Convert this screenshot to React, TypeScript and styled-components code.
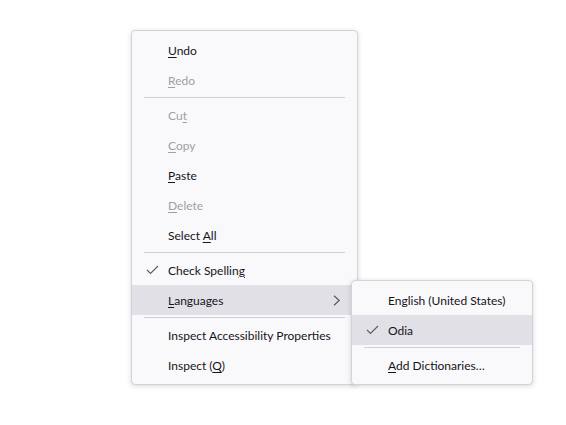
import React from "react";
import styled, { createGlobalStyle } from "styled-components";

const Global = createGlobalStyle`
  html, body { margin: 0; padding: 0; background: #ffffff; }
  body { font-family: "Lato", "Segoe UI", sans-serif; }
`;

const Page = styled.div`
  width: 566px;
  height: 425px;
  padding: 30px 0 0 131px;
  box-sizing: border-box;
`;

const Menu = styled.div<{ $width: number }>`
  position: relative;
  width: ${(p) => p.$width}px;
  box-sizing: border-box;
  background: #f9f9fb;
  border: 1px solid #d4d4d8;
  border-radius: 4px;
  padding: 4px 0;
  box-shadow: 0 1px 5px rgba(0, 0, 0, 0.16);
  display: flex;
  flex-direction: column;
`;

const SubMenu = styled(Menu)`
  position: absolute;
  left: 219px;
  top: 249px;
  z-index: 2;
`;

const Item = styled.div<{ $disabled?: boolean; $active?: boolean; $indent: number }>`
  height: 30px;
  display: flex;
  align-items: center;
  position: relative;
  padding-left: ${(p) => p.$indent}px;
  font-size: 12px;
  color: ${(p) => (p.$disabled ? "#9f9fa6" : "#15141a")};
  background: ${(p) => (p.$active ? "#e0e0e6" : "transparent")};
  white-space: nowrap;
  u { text-underline-offset: 2px; }
`;

const Check = styled.svg<{ $left: number }>`
  position: absolute;
  left: ${(p) => p.$left}px;
  top: 10px;
`;

const Chevron = styled.svg`
  position: absolute;
  right: 16px;
  top: 10px;
`;

const Sep = styled.div<{ $inset: number }>`
  height: 1px;
  background: #cfcfd8;
  margin: 2px ${(p) => p.$inset}px 2px;
`;

const CheckIcon = ({ left }: { left: number }) => (
  <Check $left={left} width="13" height="10" viewBox="0 0 13 10">
    <path d="M1 5 L4.5 8.5 L12 1" fill="none" stroke="#5b5b66" strokeWidth="1.1" />
  </Check>
);

export default function App() {
  return (
    <>
      <Global />
      <Page>
        <Menu $width={227}>
          <Item $indent={36}><span><u>U</u>ndo</span></Item>
          <Item $indent={36} $disabled><span><u>R</u>edo</span></Item>
          <Sep $inset={12} />
          <Item $indent={36} $disabled><span>Cu<u>t</u></span></Item>
          <Item $indent={36} $disabled><span><u>C</u>opy</span></Item>
          <Item $indent={36}><span><u>P</u>aste</span></Item>
          <Item $indent={36} $disabled><span><u>D</u>elete</span></Item>
          <Item $indent={36}><span>Select <u>A</u>ll</span></Item>
          <Sep $inset={12} />
          <Item $indent={36}>
            <CheckIcon left={14} />
            <span>Check Spellin<u>g</u></span>
          </Item>
          <Item $indent={36} $active>
            <span><u>L</u>anguages</span>
            <Chevron width="8" height="11" viewBox="0 0 8 11">
              <path d="M1 0.8 L6.2 5.5 L1 10.2" fill="none" stroke="#5b5b66" strokeWidth="1.2" />
            </Chevron>
          </Item>
          <Sep $inset={12} />
          <Item $indent={36}><span>Inspect Accessibility Properties</span></Item>
          <Item $indent={36}><span>Inspect (<u>Q</u>)</span></Item>
          <SubMenu $width={182}>
            <Item $indent={36}><span>English (United States)</span></Item>
            <Item $indent={36} $active>
              <CheckIcon left={14} />
              <span>Odia</span>
            </Item>
            <Sep $inset={12} />
            <Item $indent={36}><span><u>A</u>dd Dictionaries…</span></Item>
          </SubMenu>
        </Menu>
      </Page>
    </>
  );
}
